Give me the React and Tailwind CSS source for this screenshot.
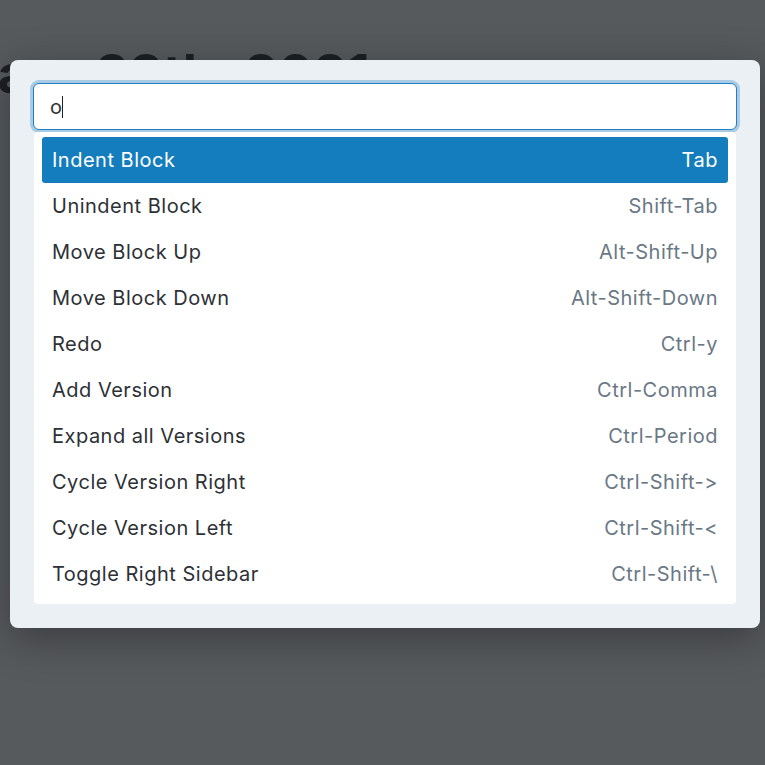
import React from "react";

const items = [
  ["Indent Block", "Tab"],
  ["Unindent Block", "Shift-Tab"],
  ["Move Block Up", "Alt-Shift-Up"],
  ["Move Block Down", "Alt-Shift-Down"],
  ["Redo", "Ctrl-y"],
  ["Add Version", "Ctrl-Comma"],
  ["Expand all Versions", "Ctrl-Period"],
  ["Cycle Version Right", "Ctrl-Shift->"],
  ["Cycle Version Left", "Ctrl-Shift-<"],
  ["Toggle Right Sidebar", "Ctrl-Shift-\\"],
];

export default function App() {
  return (
    <div className="relative w-[765px] h-[765px] overflow-hidden bg-[#7d8286] font-['Inter','Noto_Sans',sans-serif] [font-feature-settings:'calt'_0] [font-variant-ligatures:none]">
      <div className="pt-[34px] ml-[-130px] whitespace-nowrap">
        <h1 className="text-[53px] font-bold text-[#2a2e33] leading-[80px]">January 28th, 2021</h1>
      </div>
      <div className="absolute inset-0 bg-black/30" />
      <div className="absolute left-[10px] top-[60px] w-[750px] rounded-[8px] bg-[#ebf0f4] p-[23px] pb-[24px] shadow-[0_10px_40px_rgba(0,0,0,0.35)]">
        <div className="h-[47px] rounded-[6px] border-[1.5px] border-[#1f7fc0] bg-white ring-[3px] ring-[#a9cbe6] flex items-center px-[16px]">
          <span className="text-[20px] text-[#333] leading-none">o</span>
          <span className="w-px h-[22px] bg-[#222]" />
        </div>
        <div className="mt-[2px] mx-px rounded-[4px] bg-white px-[8px] pt-[5px] pb-[7px] tracking-[0.5px]">
          {items.map(([label, key], i) => (
            <div
              key={label}
              className={
                i === 0
                  ? "h-[46px] flex items-center justify-between rounded-[3px] bg-[#147dbe] px-[10px] text-white"
                  : "h-[46px] flex items-center justify-between px-[10px]"
              }
            >
              <span className={i === 0 ? "text-[20px] text-white" : "text-[20px] text-[#2d3136]"}>{label}</span>
              <span className={i === 0 ? "text-[20px] text-white" : "text-[20px] text-[#6a7886]"}>{key}</span>
            </div>
          ))}
        </div>
      </div>
    </div>
  );
}
